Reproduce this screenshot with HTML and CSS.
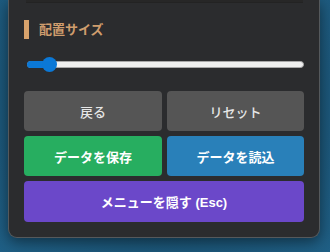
FILE: index.html
```html
<!DOCTYPE html>
<html lang="ja">
<head>
<meta charset="utf-8">
<link rel="stylesheet" href="styles.css">
</head>
<body>
<div class="stage">
  <div class="panel">
    <div class="prev-box"></div>
    <div class="section-title">配置サイズ</div>
    <div class="slider">
      <div class="slider-track">
        <div class="slider-fill" style="width: 22px"></div>
        <div class="slider-thumb" style="left: 21px"></div>
      </div>
    </div>
    <div class="buttons">
      <button class="btn btn-gray">戻る</button>
      <button class="btn btn-gray">リセット</button>
      <button class="btn btn-green">データを保存</button>
      <button class="btn btn-blue">データを読込</button>
      <button class="btn btn-purple btn-wide">メニューを隠す (Esc)</button>
    </div>
  </div>
</div>
</body>
</html>
```

FILE: styles.css
```css
html, body {
  margin: 0;
  padding: 0;
}
body {
  width: 330px;
  height: 252px;
  overflow: hidden;
  background: radial-gradient(ellipse at 50% 40%, #16405a 0%, #1b5475 60%, #1f5f85 100%);
  font-family: "Liberation Sans", "Noto Sans CJK JP", sans-serif;
}
.stage {
  padding: 0 10px 0 8px;
}
.panel {
  width: 312px;
  box-sizing: border-box;
  background: #2b2c2e;
  border: 1px solid #55595c;
  border-top: none;
  border-radius: 0 0 9px 9px;
  padding: 0 15px 15px 15px;
  box-shadow: 0 4px 14px rgba(0, 0, 0, 0.45);
}
.prev-box {
  height: 2px;
  margin: 0 1px 0 2px;
  background: #272727;
  border-bottom: 1px solid #232323;
}
.section-title {
  margin-top: 17px;
  height: 19px;
  border-left: 5px solid #d7a26c;
  padding-left: 10px;
  color: #cf9d6d;
  font-size: 13px;
  font-weight: bold;
  line-height: 19px;
}
.slider {
  padding: 0 0 0 3px;
  margin-top: 18px;
  height: 14px;
  display: flex;
  align-items: center;
}
.slider-track {
  position: relative;
  width: 278px;
  height: 7px;
  box-sizing: border-box;
  background: #efefef;
  border: 1px solid #a8a8a8;
  border-radius: 4px;
}
.slider-fill {
  position: absolute;
  left: -1px;
  top: -1px;
  height: 7px;
  background: #0b78d6;
  border-radius: 4px 0 0 4px;
}
.slider-thumb {
  position: absolute;
  top: -5px;
  width: 15px;
  height: 15px;
  margin-left: -7px;
  border-radius: 50%;
  background: #0b78d6;
}
.buttons {
  margin-top: 20px;
  display: grid;
  grid-template-columns: 138px 137px;
  column-gap: 5px;
  row-gap: 5px;
}
.btn {
  height: 40px;
  border: none;
  border-radius: 4px;
  font-family: "Liberation Sans", "Noto Sans CJK JP", sans-serif;
  font-size: 13px;
  font-weight: bold;
  color: #ffffff;
  padding: 0;
  cursor: pointer;
}
.btn-gray {
  background: #555555;
  color: #e6e6e6;
  font-weight: 500;
}
.btn-green {
  background: #27ae60;
}
.btn-blue {
  background: #2980b9;
}
.btn-purple {
  background: #6b48c9;
  height: 41px;
}
.btn-wide {
  grid-column: 1 / 3;
}
```
